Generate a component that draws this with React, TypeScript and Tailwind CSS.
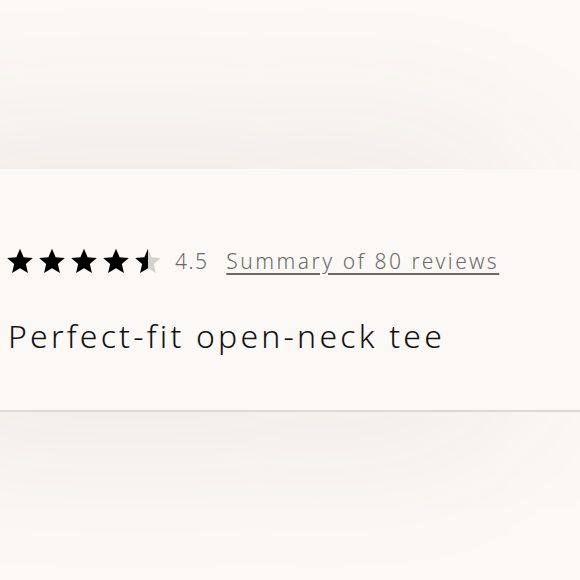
import React from "react";

const STAR = "M12 1.5l3.09 7.26 7.91.69-6 5.2 1.8 7.73L12 18.27 5.2 22.38 7 14.65l-6-5.2 7.91-.69z";

function Star({ fill }: { fill: "full" | "half" }) {
  return (
    <svg viewBox="0 0 24 24" className="w-[28px] h-[28px]">
      {fill === "half" ? (
        <>
          <defs>
            <clipPath id="left-half">
              <rect x="0" y="0" width="12" height="24" />
            </clipPath>
          </defs>
          <path d={STAR} fill="#d4d2d0" />
          <path d={STAR} fill="#000" clipPath="url(#left-half)" />
        </>
      ) : (
        <path d={STAR} fill="#000" />
      )}
    </svg>
  );
}

export default function App() {
  return (
    <div
      className="w-[580px] h-[580px] overflow-hidden bg-[#fcf8f5]"
      style={{ fontFamily: "'Noto Sans', sans-serif" }}
    >
      <div className="h-[169px]" />
      <div className="relative bg-[#fcf8f5] border-b-2 border-[#dcd8d4] h-[243px] shadow-[-90px_0_170px_20px_rgba(90,70,60,0.09)] px-[6px] pt-[75px]">
        <div className="flex items-center">
          <div className="flex items-center gap-[4px]">
            <Star fill="full" />
            <Star fill="full" />
            <Star fill="full" />
            <Star fill="full" />
            <Star fill="half" />
          </div>
          <span className="ml-[13px] mt-[2px] text-[21px] font-[350] tracking-[1.4px] text-[#6a6a6a]">4.5</span>
          <a
            href="#"
            className="ml-[18px] mt-[2px] text-[21px] font-[350] tracking-[2.5px] text-[#6a6a6a] underline underline-offset-[4px] decoration-[1.5px]"
          >
            Summary of 80 reviews
          </a>
        </div>
        <h1 className="mt-[38px] pl-[2px] text-[32px] leading-[40px] font-[320] tracking-[3.2px] text-[#111]">
          Perfect-fit open-neck tee
        </h1>
      </div>
    </div>
  );
}
